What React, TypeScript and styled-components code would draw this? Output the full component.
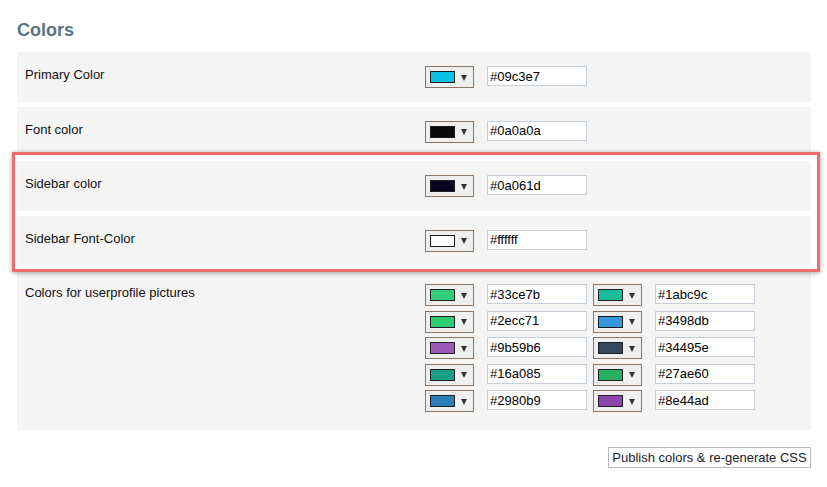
import React from "react";
import styled, { createGlobalStyle } from "styled-components";

const GlobalStyle = createGlobalStyle`
  html, body {
    margin: 0;
    padding: 0;
    background: #ffffff;
  }
  body {
    font-family: "Liberation Sans", Arial, sans-serif;
    font-size: 13px;
    color: #111;
  }
`;

const Page = styled.div`
  width: 794px;
  padding: 20px 16px 0 17px;
`;

const Title = styled.h2`
  margin: 0 0 11px;
  font-size: 18px;
  line-height: 21px;
  font-weight: bold;
  color: #5a7486;
`;

const Rows = styled.div`
  display: flex;
  flex-direction: column;
  gap: 5px;
`;

const Highlight = styled.div`
  position: relative;
  display: flex;
  flex-direction: column;
  gap: 5px;

  &::after {
    content: "";
    position: absolute;
    top: -9px;
    bottom: -7px;
    left: -5px;
    right: -9px;
    border: 3px solid #f36c6c;
    box-shadow: 0 1px 5px rgba(0, 0, 0, 0.35);
    pointer-events: none;
  }
`;

const Row = styled.div<{ $tall?: boolean }>`
  display: grid;
  grid-template-columns: 400px auto;
  align-items: start;
  box-sizing: border-box;
  height: ${(p) => (p.$tall ? "160px" : "49.5px")};
  padding: 14px 0 0 8px;
  background: #f4f4f4;
`;

const Label = styled.div`
  padding-top: 1px;
  font-size: 13px;
  line-height: 15px;
  color: #111;
`;

const Field = styled.div`
  display: flex;
  align-items: flex-start;
  gap: 13px;
`;

const PaletteGrid = styled.div`
  display: grid;
  grid-template-columns: 162px 162px;
  column-gap: 6px;
  row-gap: 4.5px;
  justify-content: start;
`;

const PickerButton = styled.div`
  box-sizing: border-box;
  width: 49px;
  height: 22px;
  display: flex;
  align-items: center;
  padding-left: 4px;
  gap: 6px;
  border: 1px solid #8a7663;
  background: #efefef;
`;

const Swatch = styled.div<{ $color: string }>`
  box-sizing: border-box;
  width: 25px;
  height: 12px;
  border: 1px solid #1e1e1e;
  background: ${(p) => p.$color};
`;

const Arrow = styled.div`
  width: 0;
  height: 0;
  border-left: 3px solid transparent;
  border-right: 3px solid transparent;
  border-top: 6px solid #3a3530;
  margin-top: 1px;
`;

const HexInput = styled.input`
  box-sizing: border-box;
  width: 100px;
  height: 20px;
  margin: 0;
  padding: 0 2px;
  border: 1px solid #c4cfd9;
  background: #fff;
  font-family: "Liberation Sans", Arial, sans-serif;
  font-size: 13px;
  color: #000;
  outline: none;
`;

const Footer = styled.div`
  display: flex;
  justify-content: flex-end;
  padding-top: 17px;
`;

const PublishButton = styled.button`
  box-sizing: border-box;
  height: 21px;
  width: 203px;
  padding: 0;
  border: 1px solid #b9b9b9;
  background: #fff;
  font-family: "Liberation Sans", Arial, sans-serif;
  font-size: 13px;
  color: #1a1a2a;
`;

function Picker({ color }: { color: string }) {
  return (
    <PickerButton>
      <Swatch $color={color} />
      <Arrow />
    </PickerButton>
  );
}

function ColorField({ color }: { color: string }) {
  return (
    <Field>
      <Picker color={color} />
      <HexInput defaultValue={color} />
    </Field>
  );
}

const profileColors = [
  "#33ce7b", "#1abc9c",
  "#2ecc71", "#3498db",
  "#9b59b6", "#34495e",
  "#16a085", "#27ae60",
  "#2980b9", "#8e44ad",
];

export default function App() {
  return (
    <>
      <GlobalStyle />
      <Page>
        <Title>Colors</Title>
        <Rows>
          <Row>
            <Label>Primary Color</Label>
            <ColorField color="#09c3e7" />
          </Row>
          <Row>
            <Label>Font color</Label>
            <ColorField color="#0a0a0a" />
          </Row>
          <Highlight>
            <Row>
              <Label>Sidebar color</Label>
              <ColorField color="#0a061d" />
            </Row>
            <Row>
              <Label>Sidebar Font-Color</Label>
              <ColorField color="#ffffff" />
            </Row>
          </Highlight>
          <Row $tall>
            <Label>Colors for userprofile pictures</Label>
            <PaletteGrid>
              {profileColors.map((c) => (
                <ColorField key={c} color={c} />
              ))}
            </PaletteGrid>
          </Row>
        </Rows>
        <Footer>
          <PublishButton>Publish colors &amp; re-generate CSS</PublishButton>
        </Footer>
      </Page>
    </>
  );
}
